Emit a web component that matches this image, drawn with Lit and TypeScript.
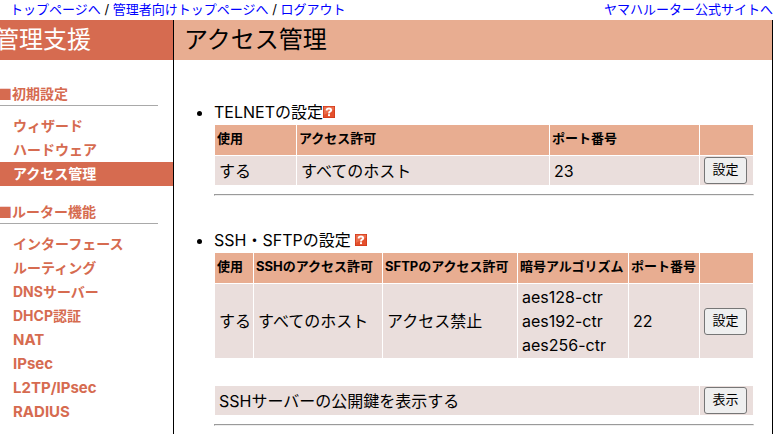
import { LitElement, html, css, svg } from "lit";
import { customElement, property } from "lit/decorators.js";

interface NavGroup {
  title: string;
  items: string[];
}

const NAV: NavGroup[] = [
  { title: "初期設定", items: ["ウィザード", "ハードウェア", "アクセス管理"] },
  {
    title: "ルーター機能",
    items: [
      "インターフェース",
      "ルーティング",
      "DNSサーバー",
      "DHCP認証",
      "NAT",
      "IPsec",
      "L2TP/IPsec",
      "RADIUS",
    ],
  },
];

const isLatin = (text: string) => /^[\x20-\x7e]+$/.test(text);

const helpIcon = svg`
  <rect width="12" height="12" fill="#d23a1c"></rect>
  <rect x=".8" y=".8" width="10.4" height="10.4" fill="#e4502c"></rect>
  <path d="M.8.8h10.4v3L.8 9z" fill="#f08060" opacity=".6"></path>
  <path d="M3.7 4.4V3.6Q4 2.5 6 2.5T8.2 4Q8.2 5 7 5.6 6 6.1 6 7.4" fill="none" stroke="#fff" stroke-width="1.9"></path>
  <rect x="5" y="8.2" width="2" height="1.9" fill="#fff"></rect>`;

@customElement("help-link")
export class HelpLink extends LitElement {
  @property() topic = "";

  static styles = css`
    .help {
      display: inline-block;
      padding-bottom: 1px;
      line-height: 0;
    }
    .icon {
      width: 12px;
      height: 12px;
    }
  `;

  render() {
    return html`<a class="help" href="#help" aria-label=${this.topic}
      ><svg class="icon" viewBox="0 0 12 12" aria-hidden="true">${helpIcon}</svg></a
    >`;
  }
}

@customElement("side-nav")
export class SideNav extends LitElement {
  @property() current = "";

  static styles = css`
    :host {
      display: block;
      padding-top: 8px;
      font-size: 14px;
      font-weight: 700;
      line-height: 24px;
      color: #d66b50;
    }
    .group {
      padding-top: 14px;
    }
    .title {
      margin: 0 15px 8px 3px;
      border-bottom: 1px solid #a9a9a9;
      font-size: 14px;
      line-height: 23px;
    }
    .list {
      margin: 0;
      padding: 0;
      list-style: none;
    }
    .link {
      display: block;
      padding-left: 18px;
      color: inherit;
      text-decoration: none;
    }
    .link.latin {
      font-size: 15px;
    }
    .link[aria-current] {
      background: #d66b50;
      color: #fff;
    }
    .mark {
      font-family: "Noto Sans CJK JP", sans-serif;
    }
  `;

  renderItem(item: string) {
    const cls = isLatin(item) ? "link latin" : "link";
    return item === this.current
      ? html`<li><a class=${cls} href="#" aria-current="page">${item}</a></li>`
      : html`<li><a class=${cls} href="#">${item}</a></li>`;
  }

  render() {
    return html`<nav>
      ${NAV.map(
        (g) => html`<section class="group">
          <h2 class="title"><span class="mark">■</span>${g.title}</h2>
          <ul class="list">
            ${g.items.map((i) => this.renderItem(i))}
          </ul>
        </section>`
      )}
    </nav>`;
  }
}

@customElement("app-root")
export class AppRoot extends LitElement {
  static styles = css`
    :host {
      display: flex;
      flex-direction: column;
      height: 100vh;
      overflow: hidden;
      background: #fff;
      color: #000;
      font: 16px/24px Inter, "Noto Sans CJK JP", sans-serif;
    }
    .topbar {
      display: flex;
      justify-content: space-between;
      padding: 0 3px 2px 10px;
      font-size: 13px;
      line-height: 18px;
      white-space: nowrap;
    }
    .toplink {
      color: #00f;
      text-decoration: none;
    }
    .body {
      display: flex;
      flex: 1;
      min-height: 0;
      margin-right: 3px;
    }
    .side {
      flex: 0 0 178px;
      margin-left: -5px;
    }
    .main {
      flex: 1;
      min-width: 0;
      border: solid #000;
      border-width: 0 1px;
    }
    .heading {
      margin: 0;
      font-size: 24px;
      font-weight: 400;
      line-height: 40px;
      white-space: nowrap;
    }
    .heading.support {
      background: #d66b50;
      color: #fff;
    }
    .heading.page {
      padding-left: 10px;
      background: #e8ad91;
    }
    .settings {
      margin: 0;
      padding: 40px 18px 0 40px;
    }
    .setting {
      margin-bottom: 32px;
    }
    .grid {
      width: 100%;
      table-layout: fixed;
      border-spacing: 1px;
    }
    .grid + .grid {
      margin-top: 26px;
    }
    .grid th {
      padding: 1px 2px 5px;
      background: #e8ad91;
      font-size: 13px;
      text-align: left;
      white-space: nowrap;
    }
    .grid td {
      padding: 1px 4px;
      background: #eadedc;
      white-space: nowrap;
    }
    .w38 { width: 38px; }
    .w53 { width: 53px; }
    .w70 { width: 70px; }
    .w81 { width: 81px; }
    .w110 { width: 110px; }
    .w134 { width: 134px; }
    .w149 { width: 149px; }
    .button {
      display: block;
      box-sizing: border-box;
      width: 43px;
      height: 27px;
      margin: 0;
      padding: 0 0 2px;
      border: 1px solid #767676;
      border-radius: 3px;
      background: #efefef;
      color: #000;
      font: 13px/23px Inter, "Noto Sans CJK JP", sans-serif;
    }
    .rule {
      height: 0;
      margin: 8px 0 0;
      border: 1px solid;
      border-color: #9a9a9a #eee #eee #9a9a9a;
    }
  `;

  render() {
    return html`
      <header class="topbar">
        <span
          ><a class="toplink" href="#">トップページへ</a> /
          <a class="toplink" href="#">管理者向けトップページへ</a> /
          <a class="toplink" href="#">ログアウト</a></span
        >
        <a class="toplink" href="#">ヤマハルーター公式サイトへ</a>
      </header>
      <div class="body">
        <aside class="side">
          <div class="heading support">管理支援</div>
          <side-nav current="アクセス管理"></side-nav>
        </aside>
        <main class="main">
          <h1 class="heading page">アクセス管理</h1>
          <ul class="settings">
            <li class="setting">
              TELNETの設定<help-link topic="TELNETの設定"></help-link>
              <table class="grid">
                <colgroup>
                  <col class="w81" /><col /><col class="w149" /><col class="w53" />
                </colgroup>
                <thead>
                  <tr><th>使用</th><th>アクセス許可</th><th>ポート番号</th><th></th></tr>
                </thead>
                <tbody>
                  <tr>
                    <td>する</td><td>すべてのホスト</td><td>23</td>
                    <td><button class="button" type="button">設定</button></td>
                  </tr>
                </tbody>
              </table>
              <hr class="rule" />
            </li>
            <li class="setting">
              SSH・SFTPの設定 <help-link topic="SSH・SFTPの設定"></help-link>
              <table class="grid">
                <colgroup>
                  <col class="w38" /><col /><col class="w134" /><col class="w110" /><col class="w70" /><col class="w53" />
                </colgroup>
                <thead>
                  <tr>
                    <th>使用</th><th>SSHのアクセス許可</th><th>SFTPのアクセス許可</th>
                    <th>暗号アルゴリズム</th><th>ポート番号</th><th></th>
                  </tr>
                </thead>
                <tbody>
                  <tr>
                    <td>する</td><td>すべてのホスト</td><td>アクセス禁止</td>
                    <td>aes128-ctr<br />aes192-ctr<br />aes256-ctr</td>
                    <td>22</td>
                    <td><button class="button" type="button">設定</button></td>
                  </tr>
                </tbody>
              </table>
              <table class="grid">
                <colgroup><col /><col class="w53" /></colgroup>
                <tbody>
                  <tr>
                    <td>SSHサーバーの公開鍵を表示する</td>
                    <td><button class="button" type="button">表示</button></td>
                  </tr>
                </tbody>
              </table>
              <hr class="rule" />
            </li>
          </ul>
        </main>
      </div>
    `;
  }
}
